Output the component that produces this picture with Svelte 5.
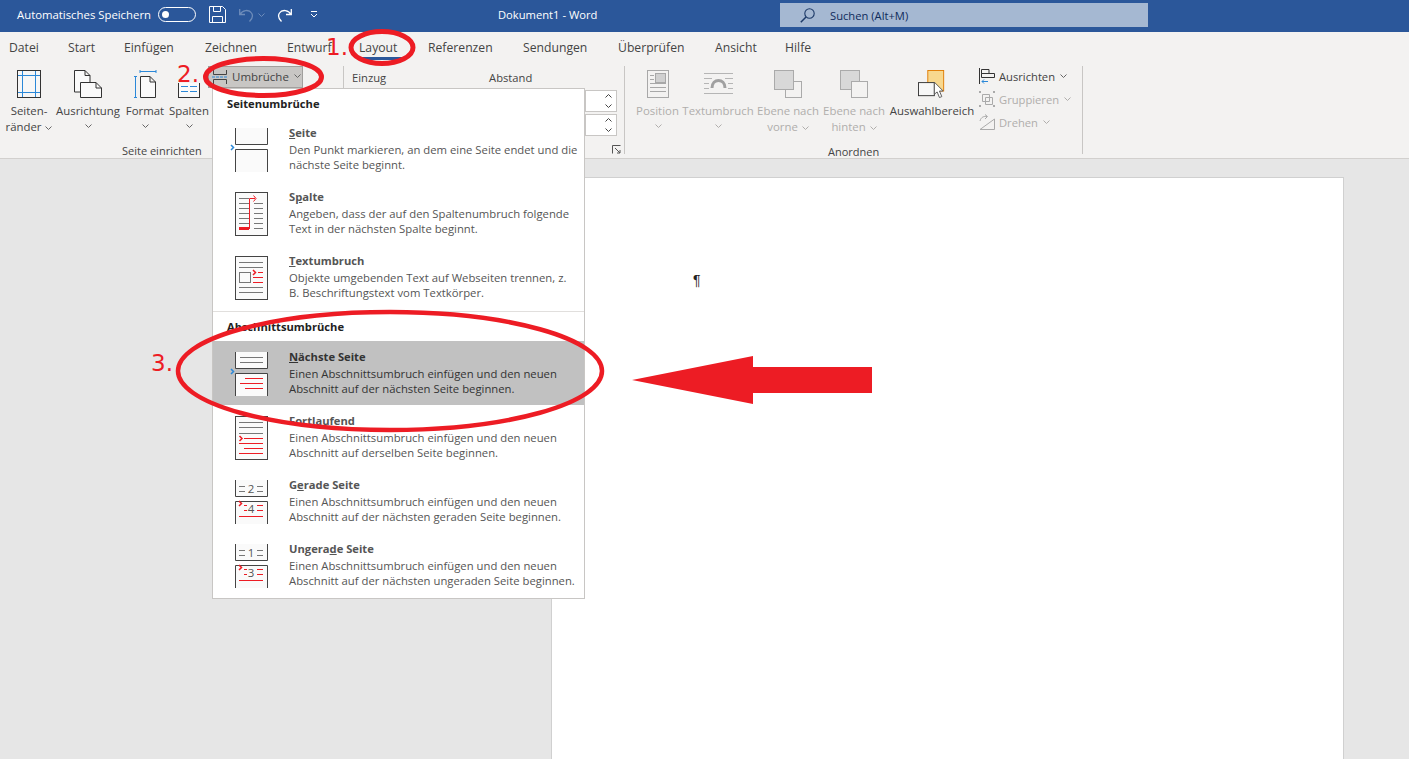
<script>
  const tabs = [
    ['Datei', 59], ['Start', 56], ['Einfügen', 81], ['Zeichnen', 82], ['Entwurf', 72], ['Layout', 69],
    ['Referenzen', 95], ['Sendungen', 95], ['Überprüfen', 97], ['Ansicht', 70], ['Hilfe', 60]
  ];
  const first = [
    { u: 'S', t: 'eite', d: ['Den Punkt markieren, an dem eine Seite endet und die', 'nächste Seite beginnt.'], i: 'seite' },
    { u: '', t: 'Spalte', d: ['Angeben, dass der auf den Spaltenumbruch folgende', 'Text in der nächsten Spalte beginnt.'], i: 'spalte' },
    { u: 'T', t: 'extumbruch', d: ['Objekte umgebenden Text auf Webseiten trennen, z.', 'B. Beschriftungstext vom Textkörper.'], i: 'text' }
  ];
  const second = [
    { u: 'N', t: 'ächste Seite', d: ['Einen Abschnittsumbruch einfügen und den neuen', 'Abschnitt auf der nächsten Seite beginnen.'], i: 'next', on: true },
    { u: '', t: 'Fortlaufend', d: ['Einen Abschnittsumbruch einfügen und den neuen', 'Abschnitt auf derselben Seite beginnen.'], i: 'cont' },
    { u: '', t: 'Gerade Seite', d: ['Einen Abschnittsumbruch einfügen und den neuen', 'Abschnitt auf der nächsten geraden Seite beginnen.'], i: 'even', a: '2', b: '4' },
    { u: '', t: 'Ungerade Seite', d: ['Einen Abschnittsumbruch einfügen und den neuen', 'Abschnitt auf der nächsten ungeraden Seite beginnen.'], i: 'even', a: '1', b: '3' }
  ];
</script>

{#snippet chev()}
  <svg class="chev" viewBox="0 0 7 4" width="7" height="4"><path d="M.5.5 3.500 3.500 6.500.5" fill="none" stroke="currentColor" /></svg>
{/snippet}

{#snippet spinner()}
  <div class="spin">
    <svg viewBox="0 0 7 14" width="7" height="14" fill="none" stroke="#444"><path d="M.5 3.500 3.500.5 6.500 3.500M.5 10.500 3.500 13.500 6.500 10.500" /></svg>
  </div>
{/snippet}

{#snippet icon(it)}
  <svg class="mi" viewBox="0 0 33 44" width="33" height="44">
    {#if it.i === 'seite' || it.i === 'next' || it.i === 'even'}
      <path d="M.5 0V16.500H32.500V0" fill="#fafafa" stroke="#444" />
      <path d="M.5 44V21.500H32.500V44" fill="#fafafa" stroke="#444" />
      {#if it.i === 'even'}
        <path d="M4 21l2.500 2.500-2.500 2.500" fill="none" stroke="#ed1c24" stroke-width="1.500" />
      {:else}
        <path d="M-4 17l2.500 2.500-2.500 2.500" fill="none" stroke="#2b88d8" stroke-width="1.500" />
      {/if}
    {:else}
      <rect x=".5" y=".5" width="32" height="43" fill="#fafafa" stroke="#444" />
    {/if}
    {#if it.i === 'next'}
      <path d="M5 5.500H28M5 10.500H28" stroke="#777" />
      <path d="M10 26.500H28M5 31.500H28M10 36.500H28" stroke="#ed1c24" />
    {:else if it.i === 'even'}
      <path d="M4 6.500H10M4 11.500H10M22 6.500H28M22 11.500H28" stroke="#777" />
      <text x="16" y="13" class="num">{it.a}</text>
      <path d="M9 25.500H12M9 30.500H12M22 25.500H28M22 30.500H28M4 36.500H28" stroke="#ed1c24" />
      <text x="16" y="33" class="num">{it.b}</text>
    {:else if it.i === 'spalte'}
      <path d="M4 6.500H14M4 11.500H14M4 16.500H14M4 21.500H14M4 26.500H14M4 31.500H14M19 11.500H28M19 16.500H28M19 21.500H28M19 26.500H28M19 31.500H28M19 36.500H28" stroke="#777" />
      <path d="M4 36.500H14" stroke="#ed1c24" stroke-width="3" />
      <path d="M14.500 37V6.500H20M18.500 3.500l2.500 3-2.500 3" fill="none" stroke="#ed1c24" />
    {:else if it.i === 'text'}
      <path d="M4 6.500H28M4 11.500H28M4 31.500H28M4 36.500H28" stroke="#777" />
      <rect x="4.500" y="16.500" width="11" height="10" fill="none" stroke="#777" />
      <path d="M18 14l2.500 2.500-2.500 2.500" fill="none" stroke="#ed1c24" stroke-width="1.500" />
      <path d="M23 16.500H28M18 21.500H28M18 26.500H28" stroke="#ed1c24" />
    {:else if it.i === 'cont'}
      <path d="M4 6.500H28M4 11.500H28M4 17.500H28" stroke="#777" />
      <path d="M4.500 20l2.500 2.500-2.500 2.500" fill="none" stroke="#ed1c24" stroke-width="1.500" />
      <path d="M9 22.500H28M4 27.500H28M9 32.500H28M4 37.500H28" stroke="#ed1c24" />
    {/if}
  </svg>
{/snippet}

{#snippet entry(it)}
  <div class="entry" class:on={it.on}>
    {@render icon(it)}
    <div class="etext">
      <div class="etitle">
        {#if it.u}<u>{it.u}</u>{it.t}{:else if it.t === 'Spalte'}S<u>p</u>alte{:else if it.t === 'Gerade Seite'}G<u>e</u>rade Seite{:else if it.t === 'Ungerade Seite'}Ungera<u>d</u>e Seite{:else}{it.t}{/if}
      </div>
      <div>{it.d[0]}</div>
      <div>{it.d[1]}</div>
    </div>
  </div>
{/snippet}

<div class="app">
  <header class="title">
    <span class="auto">Automatisches Speichern</span>
    <span class="toggle"><i></i></span>
    <svg class="qa" viewBox="0 0 17 17" width="17" height="17" fill="none" stroke="#fff"><path d="M.5.5H13.500L16.500 3.500V16.500H.5ZM4.500.5V5.500H11.500V.5M3.500 16.500V10.500H13.500V16.500" /></svg>
    <svg class="qa undo" viewBox="0 0 15 14" width="15" height="14" fill="none" stroke="#6d8cba" stroke-width="1.300"><path d="M.7 1V6.500H6M1 6.500C3 2 10 1 12.500 5 14.500 8 13 11 10.500 13.500" /></svg>
    <svg class="small" viewBox="0 0 7 4" width="7" height="4"><path d="M.5.500 3.500 3.500 6.500.500" fill="none" stroke="#6d8cba" /></svg>
    <svg class="qa redo" viewBox="0 0 15 14" width="15" height="14" fill="none" stroke="#fff" stroke-width="1.300"><path d="M14.300 1V6.500H9M14 6.500C12 2 5 1 2.500 5 .5 8 2 11 4.500 13.500" /></svg>
    <svg class="qa more" viewBox="0 0 8 7" width="8" height="7" fill="none" stroke="#fff"><path d="M1 .5H7M1 3 4 6 7 3" /></svg>
    <span class="doc">Dokument1 - Word</span>
    <div class="search">
      <svg viewBox="0 0 15 15" width="15" height="15" fill="none" stroke="#1d3a68" stroke-width="1.100"><circle cx="9.500" cy="5.500" r="4.700" /><path d="M6 9 .8 14.200" stroke-width="1.500" /></svg>
      <span>Suchen (Alt+M)</span>
    </div>
  </header>

  <nav class="tabs">
    {#each tabs as [label, w]}
      <span class="tab" class:active={label === 'Layout'} style="width:{w}px">{label}</span>
    {/each}
  </nav>

  <section class="ribbon">
    <div class="group g1">
      <div class="bigs">
        <div class="big b1">
          <svg viewBox="0 0 24 28" width="24" height="28"><rect x=".5" y=".5" width="23" height="27" fill="#f7f7f7" stroke="#333" /><path d="M5.500 1V27M18.500 1V27M1 5.500H23M1 22.500H23" stroke="#2b88d8" /></svg>
          <span>Seiten-</span><span>ränder {@render chev()}</span>
        </div>
        <div class="big b2">
          <svg viewBox="0 0 28 28" width="28" height="28" fill="#fafafa" stroke="#333"><path d="M.5.5H11L16 5.500V22H.5ZM11 .5V5.500H16" /><path d="M6.500 12.500H22L27.500 18V27.500H6.500Z" /><path d="M22 12.500V18H27.500" fill="none" /></svg>
          <span>Ausrichtung</span>{@render chev()}
        </div>
        <div class="big b3">
          <svg viewBox="0 0 23 28" width="23" height="28" fill="none"><path d="M6 1.500H22M6 0V3M22 0V3M1.500 6V28M0 6.500H3M0 27.500H3" stroke="#2b88d8" /><path d="M6.500 6.500H16L21.500 12V27.500H6.500ZM16 6.500V12H21.500" fill="#fafafa" stroke="#333" /></svg>
          <span>Format</span>{@render chev()}
        </div>
        <div class="big b4">
          <svg viewBox="0 0 22 28" width="22" height="28" fill="none"><rect x=".5" y=".5" width="21" height="27" fill="#fafafa" stroke="#333" /><path d="M3 6.500H10M12 6.500H19M3 11.500H10M12 11.500H19M3 16.500H10M12 16.500H19M3 21.500H10M12 21.500H19" stroke="#2b88d8" /></svg>
          <span>Spalten</span>{@render chev()}
        </div>
      </div>
      <div class="glabel gl1">Seite einrichten</div>
    </div>

    <div class="group g2">
      <div class="umb">
        <svg viewBox="0 0 16 14" width="16" height="14" fill="none"><path d="M1.500 0V4.500H14.500V0M1.500 14V9.500H14.500V14" stroke="#444" /><path d="M0 7H16" stroke="#2b88d8" stroke-dasharray="3 1" /></svg>
        <span>Umbrüche</span>{@render chev()}
      </div>
    </div>

    <div class="group g3">
      <div class="heads"><span>Einzug</span><span class="abst">Abstand</span></div>
      <div class="spins">
        {@render spinner()}
        {@render spinner()}
      </div>
      <svg class="launch" viewBox="0 0 9 9" width="9" height="9" fill="none" stroke="#555"><path d="M.5 8.500V.5H8.500M3 3 8 8M5 8H8V5" /></svg>
    </div>

    <div class="group g4">
      <div class="big dis p1">
        <svg viewBox="0 0 22 28" width="22" height="28" fill="#f3f2f1" stroke="#a8a8a8"><rect x=".5" y=".5" width="21" height="27" /><rect x="8.500" y="3.500" width="10" height="9" fill="#d0d0d0" /><path d="M3 5.500H7M3 9.500H7M3 13.500H19M3 17.500H19M3 21.500H19" /></svg>
        <span>Position</span>{@render chev()}
      </div>
      <div class="big dis p2">
        <svg viewBox="0 0 29 24" width="29" height="24" fill="none" stroke="#b5b5b5"><path d="M0 1.500H29M0 6.500H8M21 6.500H29M0 11.500H5M24 11.500H29M0 16.500H5M24 16.500H29M0 21.500H29" /><path d="M8 16C8 6 21 6 21 16" stroke-width="3" stroke="#a0a0a0" /></svg>
        <span>Textumbruch</span>{@render chev()}
      </div>
      <div class="big dis p3">
        <svg viewBox="0 0 28 28" width="28" height="28"><rect x="11.500" y="11.500" width="16" height="16" fill="#f3f2f1" stroke="#aaa" /><rect x=".5" y=".5" width="19" height="19" fill="#d8d8d8" stroke="#aaa" /></svg>
        <span>Ebene nach</span><span>vorne {@render chev()}</span>
      </div>
      <div class="big dis p4">
        <svg viewBox="0 0 28 28" width="28" height="28"><rect x=".5" y=".5" width="19" height="19" fill="#d8d8d8" stroke="#aaa" /><rect x="11.500" y="11.500" width="16" height="16" fill="#f3f2f1" stroke="#aaa" /></svg>
        <span>Ebene nach</span><span>hinten {@render chev()}</span>
      </div>
      <div class="big p5">
        <svg viewBox="0 0 30 30" width="30" height="30"><rect x="10.500" y=".5" width="17" height="22" fill="#f8d88e" stroke="#e07b00" /><rect x=".5" y="13.500" width="17" height="14" fill="#f7f7f7" stroke="#333" /><path d="M17.500 13V26L20.500 23.500 23 29.500 25.500 28.500 23 22.500H27Z" fill="#fff" stroke="#555" /></svg>
        <span>Auswahlbereich</span>
      </div>
      <div class="stack">
        <div class="row">
          <svg viewBox="0 0 16 16" width="16" height="16" fill="none"><path d="M.5 0V16" stroke="#333" /><path d="M2.500 1.500H10V5.500H2.500ZM2.500 5.500H15.500V9.500H2.500Z" stroke="#333" /><path d="M3 13.500H9M5 11.500 3 13.500 5 15.500" stroke="#2b88d8" /></svg>
          <span>Ausrichten</span>{@render chev()}
        </div>
        <div class="row off">
          <svg viewBox="0 0 16 16" width="16" height="16" fill="none" stroke="#aaa"><path d="M3.500 3.500H10.500V10.500H3.500ZM6.500 6.500H13.500V13.500H6.500Z" /><path d="M0 0H2V2H0ZM14 0H16V2H14ZM0 14H2V16H0ZM14 14H16V16H14Z" fill="#aaa" stroke="none" /></svg>
          <span>Gruppieren</span>{@render chev()}
        </div>
        <div class="row off">
          <svg viewBox="0 0 16 16" width="16" height="16" fill="none" stroke="#aaa"><path d="M1 15.500H15.500V5ZM1 7C2 3 5 2 8 2.500M6 .5 8.500 2.500 6 5" /></svg>
          <span>Drehen</span>{@render chev()}
        </div>
      </div>
      <div class="glabel gl4">Anordnen</div>
    </div>
  </section>

  <main class="work">
    <div class="page"><span class="pil">¶</span></div>
  </main>

  <div class="menu">
    <div class="mhead">Seitenumbrüche</div>
    {#each first as it}{@render entry(it)}{/each}
    <div class="msep"></div>
    <div class="mhead h2">Abschnittsumbrüche</div>
    {#each second as it}{@render entry(it)}{/each}
  </div>

  <svg class="marks" viewBox="0 0 1409 759" width="1409" height="759">
    <rect x="176" y="62" width="26" height="21" fill="#f3f2f1" />
    <g fill="none" stroke="#ed1c24">
      <ellipse cx="382" cy="47.500" rx="31" ry="16" stroke-width="5" />
      <ellipse cx="263.500" cy="77" rx="58" ry="18.500" stroke-width="5" />
      <ellipse cx="390" cy="371" rx="212" ry="59" stroke-width="4.500" />
    </g>
    <polygon points="632,380 753,356 753,367 872,367 872,393 753,393 753,404" fill="#ed1c24" />
    <text x="326" y="55" class="lab">1.</text>
    <text x="177" y="82" class="lab">2.</text>
    <text x="151" y="371" class="lab">3.</text>
  </svg>
</div>

<style>
  :global(body) { margin: 0; overflow: hidden; }
  .app {
    position: relative; width: 1409px; height: 759px; overflow: hidden;
    font-family: "Open Sans", "Noto Sans", sans-serif; font-size: 11.5px; color: #444; background: #e6e6e6;
  }
  .title { height: 32px; padding-bottom: 3px; box-sizing: border-box; background: #2b579a; display: flex; align-items: center; color: #fff; position: relative; }
  .auto { margin-left: 17px; width: 141px; font-size: 11.35px; white-space: nowrap; }
  .toggle { width: 38px; height: 15px; border: 1px solid #fff; border-radius: 9px; box-sizing: border-box; display: flex; align-items: center; padding-left: 3px; margin-right: 13px; }
  .toggle i { width: 7px; height: 7px; border-radius: 50%; background: #fff; }
  .qa { flex: none; }
  .undo { margin-left: 13px; }
  .small { margin-left: 4px; margin-right: 12px; flex: none; }
  .redo { margin-right: 18px; }
  .doc { position: absolute; left: 498px; top: 7px; font-size: 11.2px; }
  .search {
    position: absolute; left: 780px; top: 3px; width: 368px; height: 24px; background: #a5b8d2;
    display: flex; align-items: center; color: #0f2c5c; font-size: 11.2px;
  }
  .search svg { margin-left: 20px; margin-right: 15px; }
  .tabs { height: 32px; background: #f3f2f1; display: flex; font-size: 12.2px; color: #444; align-items: center; }
  .tab { position: relative; flex: none; padding-left: 9px; box-sizing: border-box; white-space: nowrap; margin-top: -2px; }
  .active::after { content: ""; position: absolute; left: 10px; width: 42px; height: 3px; bottom: -4px; background: #2b579a; }
  .ribbon { height: 94px; background: #f3f2f1; border-bottom: 1px solid #d2d0ce; display: flex; position: relative; box-sizing: content-box; }
  .group { position: relative; flex: none; height: 94px; }
  .g1 { width: 208px; }
  .g2 { width: 135px; padding-top: 2px; box-sizing: border-box; }
  .g3 { width: 280px; border-left: 1px solid #c8c6c4; border-right: 1px solid #c8c6c4; margin-top: 2px; height: 88px; box-sizing: content-box; }
  .g4 { width: 458px; display: flex; margin-top: 2px; height: 88px; border-right: 1px solid #c8c6c4; box-sizing: border-box; }
  .bigs { display: flex; }
  .big { display: flex; flex-direction: column; align-items: center; line-height: 16px; white-space: nowrap; flex: none; font-size: 11.4px; padding-top: 6px; box-sizing: border-box; }
  .g4 .big { padding-top: 4px; }
  .big > svg:first-child { height: 28px; margin-bottom: 5px; flex: none; }
  .big span { display: block; }
  .chev { color: #666; vertical-align: middle; margin-left: 1px; }
  .big > .chev { margin-top: 5px; }
  .b1 { width: 58px; }
  .b2 { width: 60px; }
  .b3 { width: 54px; }
  .b4 { width: 34px; }
  .glabel { position: absolute; font-size: 11px; bottom: 0; white-space: nowrap; }
  .gl1 { left: 122px; }
  .gl4 { left: 203px; bottom: -5px; }
  .umb { margin-left: 0; width: 95px; height: 22px; border: 1px solid #a19f9d; background: #c8c6c4; box-sizing: border-box; display: flex; align-items: center; gap: 4px; padding: 0 0 2px 3px; font-size: 11.5px; }
  .umb svg:first-child { margin-top: 2px; }
  .heads { display: flex; padding: 4px 0 0 8px; font-size: 11.2px; }
  .abst { margin-left: 103px; }
  .spins { position: absolute; right: 7px; top: 24px; display: flex; flex-direction: column; gap: 2px; }
  .spin { width: 32px; height: 22px; border: 1px solid #c8c6c4; background: #fff; box-sizing: border-box; display: flex; align-items: center; justify-content: flex-end; padding-right: 4px; }
  .launch { position: absolute; right: 3px; bottom: 0; }
  .dis { color: #b0aeac; }
  .dis .chev { color: #b0aeac; }
  .p1 { width: 63px; margin-left: 1px; }
  .p2 { width: 68px; margin-left: -5px; }
  .p3 { width: 66px; margin-left: 3px; }
  .p4 { width: 66px; }
  .p5 { width: 88px; margin-left: 1px; }
  .stack { display: flex; flex-direction: column; gap: 7px; padding-top: 2px; margin-left: 3px; }
  .row { display: flex; align-items: center; gap: 4px; height: 16px; font-size: 11.2px; white-space: nowrap; }
  .off { color: #b0aeac; }
  .off .chev { color: #b0aeac; }
  .work { height: 600px; padding: 18px 0 0 551px; box-sizing: border-box; }
  .page { width: 793px; height: 640px; background: #fff; border: 1px solid #d0d0d0; box-sizing: border-box; position: relative; padding: 94px 0 0 141px; font-family: "Liberation Sans", sans-serif; font-size: 14px; color: #222; }
  .menu { position: absolute; left: 212px; top: 88px; width: 373px; height: 511px; background: #fff; border: 1px solid #c8c6c4; box-sizing: border-box; }
  .mhead { height: 28px; padding: 6px 0 0 14px; box-sizing: border-box; font-weight: 700; font-size: 11.2px; color: #222; line-height: 18px; }
  .h2 { height: 29px; padding-top: 6px; }
  .msep { height: 1px; margin: 2px 0 0; background: #e1dfdd; }
  .entry { height: 64px; display: flex; box-sizing: border-box; padding-top: 11px; padding-left: 22px; color: #555; }
  .on { background: #c1c1c1; color: #333; }
  .mi { flex: none; overflow: visible; }
  .etext { margin-left: 21px; margin-top: -4px; line-height: 15px; font-size: 11.3px; white-space: nowrap; }
  .etitle { font-weight: 700; line-height: 18px; font-size: 11.2px; }
  .num { font: 11.5px "Open Sans", sans-serif; fill: #555; text-anchor: middle; }
  .marks { position: absolute; left: 0; top: 0; pointer-events: none; }
  .lab { font: 23px "DejaVu Sans", sans-serif; fill: #ed1c24; }
</style>
